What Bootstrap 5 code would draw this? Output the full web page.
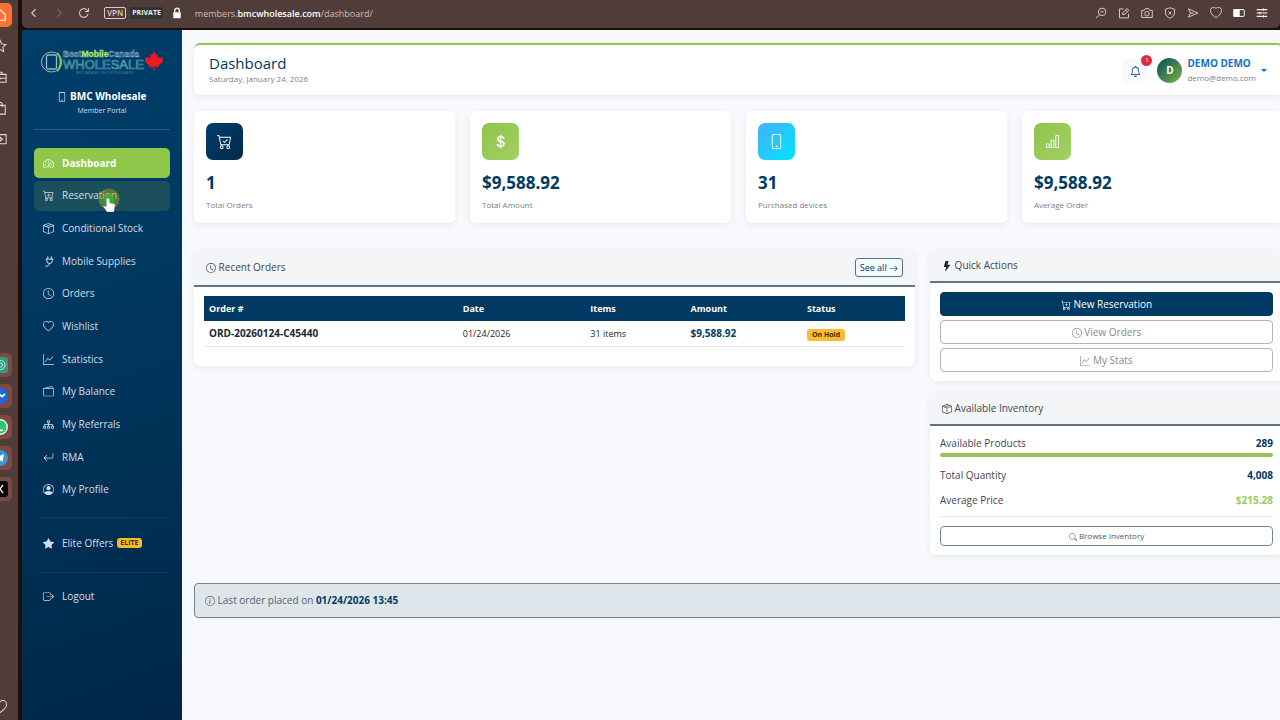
<!DOCTYPE html>
<html lang="en">
<head>
<meta charset="utf-8">
<meta name="viewport" content="width=device-width, initial-scale=1">
<title>Dashboard - BMC Wholesale</title>
<link href="https://cdn.jsdelivr.net/npm/bootstrap@5.3.0/dist/css/bootstrap.min.css" rel="stylesheet">
<style>
:root{--navy:#003a63;--lime:#8fc74a;--ink:#3f464c;--soft:#7b8085}
body{font-family:"Open Sans","Noto Sans",sans-serif;font-size:10px;line-height:15px;color:var(--ink);background:#f8f9fc}
.ico{width:1em;height:1em;fill:currentColor;flex:none;display:inline-block;vertical-align:-2px}
.window{min-height:100vh;background:#1d0d0b}
/* browser frame */
.rail{width:18px;margin-right:4px;background:#503c38;padding:3px 6px 1px 0;color:#e3d9d6;flex:none}
.rail-group{display:flex;flex-direction:column;gap:7px}
.tile{width:24px;height:24px;border-radius:5px;display:flex;align-items:center;justify-content:center;align-self:flex-end;flex:none;font-size:14px;border:0;padding:0;background:none;color:inherit}
.tile-home{background:#ff7033;color:#fff}
.tile-app{background:#7c4a43;font-size:16px}
.toolbar{height:28px;margin-bottom:2px;background:#503c38;color:#d9cecb;padding:0 12px 2px 6px;border-radius:0 0 5px 5px}
.toolbar button{border:0;background:none;color:inherit;padding:0;display:flex;font-size:12px}
.nav-tools{gap:13px;margin-right:14px}
.tools{gap:11px}
.tag-vpn{border:1px solid #d9cecb!important;border-radius:2px;font-size:8px!important;font-weight:600;line-height:10px;padding:0 2px!important}
.tag-private{background:#2c3537;border-radius:2px;font-size:7px;font-weight:700;line-height:12px;padding:0 2px;color:#eee}
.address{font-size:9px;color:#cdbfbc;margin-left:12px}
.address b{color:#fff;font-weight:600}
/* sidebar */
.side{width:160px;flex:none;padding:19px 12px;background:linear-gradient(160deg,#003f6b 0%,#00355c 50%,#002746 100%);color:#d3dfe8}
.side hr{margin:0;border-color:#fff;opacity:.16}
.side hr.faint{opacity:.06;margin-left:6px}
.brand-logo{width:122px;height:28px;display:block;margin:0 auto}
.brand-name{font-weight:700;color:#fff;margin-top:12px}
.brand-sub{font-size:7px;line-height:13px;margin-bottom:12px}
.menu{min-height:357px;margin:18px 0 12px}
.side-link{display:flex;align-items:center;height:30px;padding:0 9px;border-radius:5px;color:#d3dfe8;text-decoration:none;position:relative}
.side-link .ico{font-size:11px;margin-right:8px}
.side-link.active{background:var(--lime);color:#fff;font-weight:700}
.side-link.hovered{background:#1b4f5c}
.elite{background:#f5b92e;color:#3c3210;font-size:7px;line-height:10px;font-weight:700;border-radius:3px;padding:0 3px;margin-left:4px}
.pointer{position:absolute;left:64px;top:5px;width:22px;height:28px}
/* content */
.content{overflow:hidden;background:#f8f9fc;padding:13px 0 20px 12px;min-width:0}
.canvas{margin-right:-3px}
.panel{background:#fff;border-radius:6px;box-shadow:0 2px 6px rgba(30,40,70,.07)}
.top-card{border-top:2px solid var(--lime);padding:9px 19px 9px 15px;margin-bottom:16px}
.top-card h1{font-size:15px;line-height:18px;color:var(--navy);font-weight:500;margin:0}
.date-line{font-size:8px;line-height:14px;color:var(--soft)}
.bell{width:25px;height:25px;border:0;border-radius:5px;background:#f8f9fc;color:var(--navy);position:relative;font-size:11px;padding:0;margin-right:9px}
.count{position:absolute;right:-4px;top:-3px;width:11px;height:11px;border-radius:50%;background:#d5303f;color:#fff;font-size:6px;line-height:11px}
.user{border:0;background:none;padding:0;gap:5px;color:#1470c8}
.avatar{width:25px;height:25px;border-radius:50%;background:linear-gradient(135deg,#084a5c,#79b545);color:#fff;font-weight:700;line-height:25px}
.user-name{font-weight:700;line-height:15px}
.user-mail{font-size:8px;line-height:14px;color:var(--soft)}
.caret{border:3px solid transparent;border-top-color:#1470c8;border-bottom:0;margin-right:-3px}
.grid15{--bs-gutter-x:15px}
.stat{padding:12px 12px 11px;margin-bottom:26px}
.stat-icon{width:37px;height:37px;border-radius:7px;color:#fff;font-size:15px;margin-bottom:12px}
.bg-navy{background:linear-gradient(135deg,#003e6a,#002a4b)}
.bg-lime{background:linear-gradient(135deg,#8fc54a,#a2d063)}
.bg-sky{background:linear-gradient(135deg,#43b0fc,#00e5fb)}
.stat-value{font-size:17px;line-height:22px;font-weight:700;color:var(--navy)}
.stat-label{font-size:8px;line-height:13px;color:var(--soft);margin:4px 0 1px}
.panel-head{background:#f3f5f6;border-bottom:2px solid #5e7581;padding:9px 12px 8px;border-radius:6px 6px 0 0;line-height:15px}
.panel-body{padding:9px 10px}
.quick{margin-bottom:11px}
.btn-line{font-size:9px;line-height:13px;padding:2px 4px;border-radius:3px;border:1px solid #537388;color:var(--navy);text-decoration:none;background:#f4f9fa}
.orders{font-size:9px;margin:0 0 10px;table-layout:fixed}
.orders th,.orders td{padding:5px;line-height:15px;border-bottom:0}
.orders thead th{background:var(--navy);color:#fff}
.orders tbody tr{border-bottom:1px solid #e4e8ea}
.orders tbody th{color:#22272b}
.orders tbody th,.orders .sum{font-size:10px}
.navy{color:var(--navy)!important}
.hold{background:#fdbb34;color:#3b2c06;border-radius:3px;font-size:7px;line-height:12px;font-weight:700;padding:0 5px;display:inline-block}
.act{font-size:10px;line-height:14px;padding:4px;border-radius:4px;border:1px solid #b2b5b8;color:#85898d;background:#fff}
.act-main{background:var(--navy);border-color:var(--navy);color:#fff}
.act-sm{font-size:8px;line-height:12px;padding:3px;border-color:#6e8896;color:#44606f}
.stock{padding-top:10px}
.stock-row{margin-bottom:10px}
.stock hr{margin:8px 0 9px;opacity:.12}
.meter{height:4px;border-radius:2px;background:#e9ecef;margin:2px 0 11px}
.meter .progress-bar{background:#95c356}
.price{color:#9cc95f}
.note{background:#dfe6eb;border:1px solid #6d8798;border-radius:4px;padding:9px 10px;margin-top:28px;color:#56626b}
</style>
</head>
<body>
<svg class="d-none" viewBox="0 0 16 16">
<symbol id="phone" viewBox="0 0 16 16"><path d="M11 1a1 1 0 0 1 1 1v12a1 1 0 0 1-1 1H5a1 1 0 0 1-1-1V2a1 1 0 0 1 1-1zM5 0a2 2 0 0 0-2 2v12a2 2 0 0 0 2 2h6a2 2 0 0 0 2-2V2a2 2 0 0 0-2-2z"/><path d="M8 14a1 1 0 1 0 0-2 1 1 0 0 0 0 2"/></symbol>
<symbol id="speed" viewBox="0 0 16 16"><path d="M8 4a.5.5 0 0 1 .5.5V6a.5.5 0 0 1-1 0V4.500A.5.5 0 0 1 8 4M3.732 5.732a.5.5 0 0 1 .707 0l.915.914a.5.5 0 1 1-.708.708l-.914-.915a.5.5 0 0 1 0-.707M2 10a.5.5 0 0 1 .5-.5h1.586a.5.5 0 0 1 0 1H2.500A.5.5 0 0 1 2 10m9.500 0a.5.5 0 0 1 .5-.5h1.500a.5.5 0 0 1 0 1H12a.5.5 0 0 1-.5-.5m.754-4.246a.39.39 0 0 0-.527-.02L7.547 9.310a.91.91 0 1 0 1.302 1.258l3.434-4.297a.39.39 0 0 0-.029-.518z"/><path fill-rule="evenodd" d="M0 10a8 8 0 1 1 15.547 2.661c-.442 1.253-1.845 1.602-2.932 1.250C11.309 13.488 9.475 13 8 13c-1.474 0-3.310.488-4.615.911-1.087.352-2.490.003-2.932-1.250A8 8 0 0 1 0 10m8-7a7 7 0 0 0-6.603 9.329c.203.575.923.876 1.680.630C4.397 12.533 6.358 12 8 12s3.604.532 4.923.960c.757.245 1.477-.056 1.680-.631A7 7 0 0 0 8 3"/></symbol>
<symbol id="cart" viewBox="0 0 16 16"><path d="M0 1.500A.5.5 0 0 1 .5 1H2a.5.5 0 0 1 .485.379L2.890 3H14.500a.5.5 0 0 1 .491.592l-1.500 8A.5.5 0 0 1 13 12H4a.5.5 0 0 1-.491-.408L2.010 3.607 1.610 2H.5a.5.5 0 0 1-.5-.5M3.102 4l1.313 7h8.170l1.313-7zM5 12a2 2 0 1 0 0 4 2 2 0 0 0 0-4m7 0a2 2 0 1 0 0 4 2 2 0 0 0 0-4m-7 1a1 1 0 1 1 0 2 1 1 0 0 1 0-2m7 0a1 1 0 1 1 0 2 1 1 0 0 1 0-2"/></symbol>
<symbol id="cart-plus" viewBox="0 0 16 16"><use href="#cart"/><path d="M9 5.500a.5.5 0 0 0-1 0V7H6.500a.5.5 0 0 0 0 1H8v1.500a.5.5 0 0 0 1 0V8h1.500a.5.5 0 0 0 0-1H9z"/></symbol>
<symbol id="cart-check" viewBox="0 0 16 16"><use href="#cart"/><path d="M11.354 6.354a.5.5 0 0 0-.708-.708L8 8.293 6.854 7.146a.5.5 0 1 0-.708.708l1.500 1.500a.5.5 0 0 0 .708 0z"/></symbol>
<symbol id="box" viewBox="0 0 16 16"><path d="M8.186 1.113a.5.5 0 0 0-.372 0L1.846 3.500l2.404.961L10.404 2zm3.564 1.426L5.596 5 8 5.961 14.154 3.500zm3.250 1.700-6.500 2.600v7.922l6.500-2.600V4.240zM7.500 14.762V6.838L1 4.239v7.923zM7.443.184a1.500 1.500 0 0 1 1.114 0l7.129 2.852A.5.5 0 0 1 16 3.500v8.662a1 1 0 0 1-.629.928l-7.185 2.874a.5.5 0 0 1-.372 0L.63 13.090a1 1 0 0 1-.63-.928V3.500a.5.5 0 0 1 .314-.464z"/></symbol>
<symbol id="plug" viewBox="0 0 16 16"><g fill="none" stroke="currentColor" stroke-width="1.400" stroke-linecap="round"><path d="M7 1v3M12 1v3M4.500 4.500h10M5.500 4.500V7a4 4 0 0 0 8 0V4.500M9.500 11c0 3.500-3 4-5.500 4"/></g></symbol>
<symbol id="clock" viewBox="0 0 16 16"><path d="M8 3.500a.5.5 0 0 0-1 0V9a.5.5 0 0 0 .252.434l3.500 2a.5.5 0 0 0 .496-.868L8 8.710z"/><path d="M8 16A8 8 0 1 0 8 0a8 8 0 0 0 0 16m7-8A7 7 0 1 1 1 8a7 7 0 0 1 14 0"/></symbol>
<symbol id="heart" viewBox="0 0 16 16"><path d="m8 2.748-.717-.737C5.600.281 2.514.878 1.400 3.053c-.523 1.023-.641 2.500.314 4.385.920 1.815 2.834 3.989 6.286 6.357 3.452-2.368 5.365-4.542 6.286-6.357.955-1.886.838-3.362.314-4.385C13.486.878 10.400.280 8.717 2.010zM8 15C-7.333 4.868 3.279-3.040 7.824 1.143q.090.083.176.171a3 3 0 0 1 .176-.170C12.720-3.042 23.333 4.867 8 15"/></symbol>
<symbol id="graph" viewBox="0 0 16 16"><path fill-rule="evenodd" d="M0 0h1v15h15v1H0zm14.817 3.113a.5.5 0 0 1 .070.704l-4.500 5.500a.5.5 0 0 1-.740.037L7.060 6.767l-3.656 5.027a.5.5 0 0 1-.808-.588l4-5.500a.5.5 0 0 1 .758-.060l2.609 2.610 4.150-5.073a.5.5 0 0 1 .704-.070"/></symbol>
<symbol id="wallet" viewBox="0 0 16 16"><path d="M12.136.326A1.500 1.500 0 0 1 14 1.780V3h.5A1.500 1.500 0 0 1 16 4.500v9a1.500 1.500 0 0 1-1.500 1.500h-13A1.500 1.500 0 0 1 0 13.500v-9a1.500 1.500 0 0 1 1.432-1.499zM5.562 3H13V1.780a.5.5 0 0 0-.621-.484zM1.500 4a.5.5 0 0 0-.5.5v9a.5.5 0 0 0 .5.5h13a.5.5 0 0 0 .5-.5v-9a.5.5 0 0 0-.5-.5z"/></symbol>
<symbol id="diagram" viewBox="0 0 16 16"><g fill="none" stroke="currentColor" stroke-width="1.200"><path d="M6.500 2.500h3v3h-3zM.8 10.500h3v3h-3zM6.500 10.500h3v3h-3zM12.200 10.500h3v3h-3zM8 5.500v5M2 10.500v-2.500h12v2.500"/></g></symbol>
<symbol id="return" viewBox="0 0 16 16"><path fill-rule="evenodd" d="M14.500 1.500a.5.5 0 0 1 .5.5v4.800a2.500 2.500 0 0 1-2.500 2.500H2.707l3.347 3.346a.5.5 0 0 1-.708.708l-4.200-4.200a.5.5 0 0 1 0-.708l4-4a.5.5 0 1 1 .708.708L2.707 8.300H12.500A1.500 1.500 0 0 0 14 6.800V2a.5.5 0 0 1 .5-.5"/></symbol>
<symbol id="person" viewBox="0 0 16 16"><path d="M11 6a3 3 0 1 1-6 0 3 3 0 0 1 6 0"/><path fill-rule="evenodd" d="M0 8a8 8 0 1 1 16 0A8 8 0 0 1 0 8m8-7a7 7 0 0 0-5.468 11.370C3.242 11.226 4.805 10 8 10s4.757 1.225 5.468 2.370A7 7 0 0 0 8 1"/></symbol>
<symbol id="star-fill" viewBox="0 0 16 16"><path d="M3.612 15.443c-.386.198-.824-.149-.746-.592l.830-4.730L.173 6.765c-.329-.314-.158-.888.283-.950l4.898-.696L7.538.792c.197-.390.730-.390.927 0l2.184 4.327 4.898.696c.441.062.612.636.282.950l-3.522 3.356.830 4.730c.078.443-.360.790-.746.592L8 13.187z"/></symbol>
<symbol id="exit" viewBox="0 0 16 16"><path fill-rule="evenodd" d="M10 12.500a.5.5 0 0 1-.5.5h-8a.5.5 0 0 1-.5-.5v-9a.5.5 0 0 1 .5-.5h8a.5.5 0 0 1 .5.5v2a.5.5 0 0 0 1 0v-2A1.500 1.500 0 0 0 9.500 2h-8A1.500 1.500 0 0 0 0 3.500v9A1.500 1.500 0 0 0 1.500 14h8a1.500 1.500 0 0 0 1.500-1.500v-2a.5.5 0 0 0-1 0z"/><path fill-rule="evenodd" d="M15.854 8.354a.5.5 0 0 0 0-.708l-3-3a.5.5 0 0 0-.708.708L14.293 7.500H5.500a.5.5 0 0 0 0 1h8.793l-2.147 2.146a.5.5 0 0 0 .708.708z"/></symbol>
<symbol id="bell" viewBox="0 0 16 16"><path d="M8 16a2 2 0 0 0 2-2H6a2 2 0 0 0 2 2M8 1.918l-.797.161A4 4 0 0 0 4 6c0 .628-.134 2.197-.459 3.742-.160.767-.376 1.566-.663 2.258h10.244c-.287-.692-.502-1.490-.663-2.258C12.134 8.197 12 6.628 12 6a4 4 0 0 0-3.203-3.920zM14.220 12c.223.447.481.801.780 1H1c.299-.199.557-.553.780-1C2.680 10.200 3 6.880 3 6c0-2.420 1.720-4.440 4.005-4.901a1 1 0 1 1 1.990 0A5 5 0 0 1 13 6c0 .880.320 4.200 1.220 6"/></symbol>
<symbol id="search" viewBox="0 0 16 16"><path d="M11.742 10.344a6.500 6.500 0 1 0-1.397 1.398l3.850 3.850a1 1 0 0 0 1.415-1.414zM12 6.500a5.500 5.500 0 1 1-11 0 5.500 5.500 0 0 1 11 0"/></symbol>
<symbol id="bolt" viewBox="0 0 16 16"><path d="M5.520.359A.5.5 0 0 1 6 0h4a.5.5 0 0 1 .474.658L8.694 6H12.500a.5.5 0 0 1 .395.807l-7 9a.5.5 0 0 1-.873-.454L6.823 9.500H3.500a.5.5 0 0 1-.480-.641z"/></symbol>
<symbol id="info" viewBox="0 0 16 16"><path d="M8 15A7 7 0 1 1 8 1a7 7 0 0 1 0 14m0 1A8 8 0 1 0 8 0a8 8 0 0 0 0 16"/><path d="m8.930 6.588-2.290.287-.082.380.450.083c.294.070.352.176.288.469l-.738 3.468c-.194.897.105 1.319.808 1.319.545 0 1.178-.252 1.465-.598l.088-.416c-.200.176-.492.246-.686.246-.275 0-.375-.193-.304-.533zM9 4.500a1 1 0 1 1-2 0 1 1 0 0 1 2 0"/></symbol>
<symbol id="arrow" viewBox="0 0 16 16"><path fill-rule="evenodd" d="M1 8a.5.5 0 0 1 .5-.5h11.793l-3.147-3.146a.5.5 0 0 1 .708-.708l4 4a.5.5 0 0 1 0 .708l-4 4a.5.5 0 0 1-.708-.708L13.293 8.500H1.500A.5.5 0 0 1 1 8"/></symbol>
<symbol id="bars" viewBox="0 0 16 16"><path d="M4 11H2v3h2zm5-4H7v7h2zm5-5v12h-2V2zm-2-1a1 1 0 0 0-1 1v12a1 1 0 0 0 1 1h2a1 1 0 0 0 1-1V2a1 1 0 0 0-1-1zM6 7a1 1 0 0 1 1-1h2a1 1 0 0 1 1 1v7a1 1 0 0 1-1 1H7a1 1 0 0 1-1-1zm-5 4a1 1 0 0 1 1-1h2a1 1 0 0 1 1 1v3a1 1 0 0 1-1 1H2a1 1 0 0 1-1-1z"/></symbol>
<symbol id="dollar" viewBox="0 0 16 16"><path stroke="currentColor" stroke-width=".4" d="M4 10.781c.148 1.667 1.513 2.850 3.591 3.003V15h1.043v-1.216c2.270-.179 3.678-1.438 3.678-3.300 0-1.590-.947-2.510-2.956-3.028l-.722-.187V3.467c1.122.110 1.879.714 2.070 1.616h1.470c-.166-1.600-1.540-2.748-3.540-2.875V1H7.591v1.233c-1.939.230-3.270 1.472-3.270 3.156 0 1.454.966 2.483 2.661 2.917l.610.162v4.031c-1.149-.170-1.940-.800-2.131-1.718zm3.391-3.836c-1.043-.263-1.600-.825-1.600-1.616 0-.944.704-1.641 1.800-1.828v3.495l-.200-.050zm1.591 1.872c1.287.323 1.852.859 1.852 1.769 0 1.097-.826 1.828-2.200 1.939V8.730z"/></symbol>
<symbol id="back" viewBox="0 0 16 16"><path d="M10 3 5 8l5 5" fill="none" stroke="currentColor" stroke-width="1.500"/></symbol>
<symbol id="fwd" viewBox="0 0 16 16"><path d="m6 3 5 5-5 5" fill="none" stroke="currentColor" stroke-width="1.300"/></symbol>
<symbol id="reload" viewBox="0 0 16 16"><path d="M13.500 9A5.800 5.800 0 1 1 12 4l1.500 1.500M14 1.500v4.500H9.500" fill="none" stroke="currentColor" stroke-width="1.400"/></symbol>
<symbol id="lock" viewBox="0 0 16 16"><path d="M3 7h10v8H3z" fill="#fff"/><path d="M5 7V4.500a3 3 0 0 1 6 0V7" fill="none" stroke="#fff" stroke-width="1.800"/></symbol>
<symbol id="zoomout" viewBox="0 0 16 16"><path d="M14.500 6.500a5 5 0 1 1-10 0 5 5 0 0 1 10 0M6 10.500 1 15M7.500 6.500h4" fill="none" stroke="currentColor" stroke-width="1.300"/></symbol>
<symbol id="edit" viewBox="0 0 16 16"><path d="M7 2.500H2v12h12V9M6 10l1-3 5-5 2.500 2.500-5 5zM10 4l2.500 2.500" fill="none" stroke="currentColor" stroke-width="1.300"/></symbol>
<symbol id="camera" viewBox="0 0 16 16"><path d="M1 4.500h3.500L6 2h4l1.500 2.500H15V14H1zM11 9a3 3 0 1 1-6 0 3 3 0 0 1 6 0" fill="none" stroke="currentColor" stroke-width="1.300"/></symbol>
<symbol id="shield" viewBox="0 0 16 16"><path d="m8 1 6 2v5c0 3.500-2.500 5.500-6 7-3.500-1.500-6-3.500-6-7V3zM6 6l4 4M10 6l-4 4" fill="none" stroke="currentColor" stroke-width="1.300"/></symbol>
<symbol id="send" viewBox="0 0 16 16"><path d="M2 2.500 14.500 8 2 13.500 4.500 8zM4.500 8H9" fill="none" stroke="currentColor" stroke-width="1.300"/></symbol>
<symbol id="battery" viewBox="0 0 16 16"><path d="M1 3.500h13a1 1 0 0 1 1 1v7a1 1 0 0 1-1 1H1z" fill="none" stroke="#fff" stroke-width="1.300"/><path d="M1 3h8v10H1z" fill="#fff"/></symbol>
<symbol id="sliders" viewBox="0 0 16 16"><path d="M1 3.500h14M1 8h14M1 12.500h14M10 2v3M5 6.500v3M10 11v3" fill="none" stroke="#fff" stroke-width="1.400"/></symbol>
<symbol id="home" viewBox="0 0 16 16"><path d="M2 7.500 8 2l6 5.500V14H2z" fill="none" stroke="currentColor" stroke-width="1.300"/></symbol>
<symbol id="star" viewBox="0 0 16 16"><path d="m8 1.500 2 4.300 4.700.600-3.500 3.200.900 4.700L8 12l-4.100 2.300.900-4.700L1.300 6.400 6 5.800z" fill="none" stroke="currentColor" stroke-width="1.200"/></symbol>
<symbol id="case" viewBox="0 0 16 16"><path d="M1 5h14v9H1zM5.500 5V2.500h5V5M1 9.500h14M8 8.500v2.500" fill="none" stroke="currentColor" stroke-width="1.200"/></symbol>
<symbol id="bag" viewBox="0 0 16 16"><path d="M2 5h12v10H2zM5.500 7V4a2.500 2.500 0 0 1 5 0v3" fill="none" stroke="currentColor" stroke-width="1.200"/></symbol>
<symbol id="play" viewBox="0 0 16 16"><path d="M1 3h14v10.500H1zM8 6l3 2.300L8 10.500z" fill="none" stroke="currentColor" stroke-width="1.200"/></symbol>
</svg>

<div class="window d-flex">
  <aside class="rail d-flex flex-column justify-content-between overflow-hidden" aria-label="Browser sidebar">
    <div class="rail-group">
      <button class="tile tile-home" aria-label="Home"><svg class="ico"><use href="#home"/></svg></button>
      <button class="tile" aria-label="Favourites"><svg class="ico"><use href="#star"/></svg></button>
      <button class="tile" aria-label="Workspace"><svg class="ico"><use href="#case"/></svg></button>
      <button class="tile" aria-label="Shopping"><svg class="ico"><use href="#bag"/></svg></button>
      <button class="tile" aria-label="Player"><svg class="ico"><use href="#play"/></svg></button>
    </div>
    <div class="rail-group pt-2">
      <button class="tile tile-app" aria-label="Assistant"><svg class="ico" viewBox="0 0 16 16"><rect width="16" height="16" rx="3" fill="#369b80"/><g fill="none" stroke="#c9f0e4"><circle cx="8.500" cy="8" r="4.500"/><circle cx="8.500" cy="8" r="2"/></g></svg></button>
      <button class="tile tile-app" aria-label="Messenger"><svg class="ico" viewBox="0 0 16 16"><circle cx="8" cy="8" r="8" fill="#1769dd"/><path d="m4 10 3-4 3 2.500L13 6" fill="none" stroke="#fff" stroke-width="1.800"/></svg></button>
      <button class="tile tile-app" aria-label="WhatsApp"><svg class="ico" viewBox="0 0 16 16"><circle cx="8" cy="8" r="7.300" fill="#2fc764" stroke="#e8f7ec" stroke-width="1.400"/><path d="M5 8c1 3 4 4 6 3" fill="none" stroke="#fff" stroke-width="1.500"/></svg></button>
      <button class="tile tile-app" aria-label="Telegram"><svg class="ico" viewBox="0 0 16 16"><circle cx="8" cy="8" r="8" fill="#3399cc"/><path d="m3 8 9-4-1.500 8L7 9.500z" fill="#fff"/></svg></button>
      <button class="tile tile-app" aria-label="X"><svg class="ico" viewBox="0 0 16 16"><rect width="16" height="16" rx="3" fill="#050505"/><path d="m5 4 6 8M11 4l-6 8" stroke="#fff" stroke-width="1.300"/></svg></button>
    </div>
    <div class="rail-group"><button class="tile" aria-label="Likes"><svg class="ico"><use href="#heart"/></svg></button></div>
  </aside>

  <div class="d-flex flex-column flex-grow-1 overflow-hidden">
    <div class="toolbar d-flex align-items-center justify-content-between">
      <div class="d-flex align-items-center">
        <div class="nav-tools d-flex">
          <button aria-label="Back"><svg class="ico"><use href="#back"/></svg></button>
          <button class="opacity-50" aria-label="Forward"><svg class="ico"><use href="#fwd"/></svg></button>
          <button aria-label="Reload"><svg class="ico"><use href="#reload"/></svg></button>
        </div>
        <button class="tag-vpn me-1">VPN</button>
        <span class="tag-private me-2">PRIVATE</span>
        <button aria-label="Site security"><svg class="ico"><use href="#lock"/></svg></button>
        <span class="address">members.<b>bmcwholesale.com</b>/dashboard/</span>
      </div>
      <div class="tools d-flex align-items-center">
        <button aria-label="Zoom out"><svg class="ico"><use href="#zoomout"/></svg></button>
        <button aria-label="Edit"><svg class="ico"><use href="#edit"/></svg></button>
        <button aria-label="Snapshot"><svg class="ico"><use href="#camera"/></svg></button>
        <button aria-label="Ad blocker"><svg class="ico"><use href="#shield"/></svg></button>
        <button aria-label="Send"><svg class="ico"><use href="#send"/></svg></button>
        <button aria-label="Like"><svg class="ico"><use href="#heart"/></svg></button>
        <button aria-label="Battery saver"><svg class="ico"><use href="#battery"/></svg></button>
        <button aria-label="Easy setup"><svg class="ico"><use href="#sliders"/></svg></button>
      </div>
    </div>

    <div class="d-flex flex-grow-1">
      <nav class="side" aria-label="Member menu">
        <svg class="brand-logo" viewBox="0 0 122 28" role="img" aria-label="Best Mobile Canada Wholesale">
          <g fill="none" stroke="#9ab7c7"><circle cx="10.500" cy="13" r="10"/><rect x="5.500" y="6" width="10" height="14" rx="1.500" stroke-width="1.300"/></g>
          <path d="M16 4c5 5 5 13 0 18" fill="none" stroke="#8fc74a" stroke-width="2"/>
          <g font-family="Liberation Sans, sans-serif" font-weight="700">
            <text x="22" y="8" font-size="8.500" fill="#16517a" stroke="#a9c3d0" stroke-width=".4">Best<tspan fill="#a6e36b" stroke="#a6e36b">Mobile</tspan>Canada</text>
            <text x="22" y="20" font-size="13" font-weight="400" fill="none" stroke="#5ba3ae" stroke-width=".7">WHOLESALE</text>
            <text x="35" y="25" font-size="3" font-weight="400" fill="#4f8399">BEST MANAGED, BUILT FOR BUSINESS</text>
          </g>
          <path d="m113 2 2 4 2-1-.6 5 2.600-2.500.6 1.500 2.900-.3-1.200 3 1 .8-4.800 4 .5 1.800-4.500-.7.200 4h-1.400l.2-4-4.500.7.5-1.800-4.800-4 1-.8-1.200-3 2.900.3.6-1.500 2.600 2.500-.6-5 2 1z" fill="#f21820"/>
        </svg>
        <div class="brand-name text-center"><svg class="ico"><use href="#phone"/></svg> BMC Wholesale</div>
        <div class="brand-sub text-center">Member Portal</div>
        <hr>
        <ul class="menu list-unstyled d-flex flex-column justify-content-between">
          <li><a class="side-link active" href="#" aria-current="page"><svg class="ico"><use href="#speed"/></svg>Dashboard</a></li>
          <li><a class="side-link hovered" href="#"><svg class="ico"><use href="#cart-plus"/></svg>Reservation
            <svg class="pointer" viewBox="0 0 22 28" aria-hidden="true"><circle cx="11" cy="13" r="10.500" fill="#9aa51e" opacity=".5"/><circle cx="11" cy="14" r="5" fill="#19c819" opacity=".85"/><path d="M10 12c1.200 0 1.800.7 1.800 1.800v3l4 .8c1 .2 1.400.8 1.300 1.800L16 26h-7l-4-5.500c.7-1.200 2-.8 3.200.5v-7.200c0-1.100.6-1.800 1.800-1.800z" fill="#fff" stroke="#444" stroke-width=".4"/></svg></a></li>
          <li><a class="side-link" href="#"><svg class="ico"><use href="#box"/></svg>Conditional Stock</a></li>
          <li><a class="side-link" href="#"><svg class="ico"><use href="#plug"/></svg>Mobile Supplies</a></li>
          <li><a class="side-link" href="#"><svg class="ico"><use href="#clock"/></svg>Orders</a></li>
          <li><a class="side-link" href="#"><svg class="ico"><use href="#heart"/></svg>Wishlist</a></li>
          <li><a class="side-link" href="#"><svg class="ico"><use href="#graph"/></svg>Statistics</a></li>
          <li><a class="side-link" href="#"><svg class="ico"><use href="#wallet"/></svg>My Balance</a></li>
          <li><a class="side-link" href="#"><svg class="ico"><use href="#diagram"/></svg>My Referrals</a></li>
          <li><a class="side-link" href="#"><svg class="ico"><use href="#return"/></svg>RMA</a></li>
          <li><a class="side-link" href="#"><svg class="ico"><use href="#person"/></svg>My Profile</a></li>
        </ul>
        <hr class="faint">
        <a class="side-link my-2 pt-1" href="#"><svg class="ico"><use href="#star-fill"/></svg>Elite Offers<span class="elite">ELITE</span></a>
        <hr class="faint mt-3">
        <a class="side-link mt-2" href="#"><svg class="ico"><use href="#exit"/></svg>Logout</a>
      </nav>

      <main class="content flex-grow-1">
        <div class="canvas">
          <header class="panel top-card d-flex justify-content-between align-items-center">
            <div>
              <h1>Dashboard</h1>
              <div class="date-line">Saturday, January 24, 2026</div>
            </div>
            <div class="d-flex align-items-center">
              <button class="bell" aria-label="Notifications"><svg class="ico"><use href="#bell"/></svg><span class="count">1</span></button>
              <button class="user d-flex align-items-center text-start">
                <span class="avatar text-center">D</span>
                <span><span class="user-name d-block">DEMO DEMO</span><span class="user-mail d-block">demo@demo.com</span></span>
                <span class="caret"></span>
              </button>
            </div>
          </header>

          <div class="row grid15">
            <div class="col-3"><div class="panel stat">
              <div class="stat-icon bg-navy d-flex align-items-center justify-content-center"><svg class="ico"><use href="#cart-check"/></svg></div>
              <div class="stat-value">1</div><div class="stat-label">Total Orders</div></div></div>
            <div class="col-3"><div class="panel stat">
              <div class="stat-icon bg-lime d-flex align-items-center justify-content-center"><svg class="ico"><use href="#dollar"/></svg></div>
              <div class="stat-value">$9,588.92</div><div class="stat-label">Total Amount</div></div></div>
            <div class="col-3"><div class="panel stat">
              <div class="stat-icon bg-sky d-flex align-items-center justify-content-center"><svg class="ico"><use href="#phone"/></svg></div>
              <div class="stat-value">31</div><div class="stat-label">Purchased devices</div></div></div>
            <div class="col-3"><div class="panel stat">
              <div class="stat-icon bg-lime d-flex align-items-center justify-content-center"><svg class="ico"><use href="#bars"/></svg></div>
              <div class="stat-value">$9,588.92</div><div class="stat-label">Average Order</div></div></div>
          </div>

          <div class="row grid15">
            <div class="col-8">
              <section class="panel">
                <div class="panel-head d-flex justify-content-between align-items-center">
                  <span><svg class="ico"><use href="#clock"/></svg> Recent Orders</span>
                  <a class="btn-line" href="#">See all <svg class="ico"><use href="#arrow"/></svg></a>
                </div>
                <div class="panel-body">
                  <table class="table orders">
                    <colgroup><col style="width:36.2%"><col style="width:18.2%"><col style="width:14.3%"><col style="width:16.6%"><col style="width:14.7%"></colgroup>
                    <thead><tr><th scope="col">Order #</th><th scope="col">Date</th><th scope="col">Items</th><th scope="col">Amount</th><th scope="col">Status</th></tr></thead>
                    <tbody><tr><th scope="row">ORD-20260124-C45440</th><td>01/24/2026</td><td>31 items</td><td class="sum fw-bold navy">$9,588.92</td><td><span class="hold">On Hold</span></td></tr></tbody>
                  </table>
                </div>
              </section>
            </div>
            <div class="col-4">
              <section class="panel quick">
                <div class="panel-head"><svg class="ico text-dark"><use href="#bolt"/></svg> Quick Actions</div>
                <div class="panel-body d-grid gap-1">
                  <button class="act act-main"><svg class="ico"><use href="#cart-plus"/></svg> New Reservation</button>
                  <button class="act"><svg class="ico"><use href="#clock"/></svg> View Orders</button>
                  <button class="act"><svg class="ico"><use href="#graph"/></svg> My Stats</button>
                </div>
              </section>
              <section class="panel">
                <div class="panel-head"><svg class="ico"><use href="#box"/></svg> Available Inventory</div>
                <div class="panel-body stock">
                  <div class="d-flex justify-content-between"><span>Available Products</span><b class="navy">289</b></div>
                  <div class="progress meter" role="progressbar" aria-label="Available products" aria-valuenow="100" aria-valuemin="0" aria-valuemax="100"><div class="progress-bar" style="width:100%"></div></div>
                  <div class="stock-row d-flex justify-content-between"><span>Total Quantity</span><b class="navy">4,008</b></div>
                  <div class="d-flex justify-content-between"><span>Average Price</span><b class="price">$215.28</b></div>
                  <hr>
                  <button class="act act-sm w-100"><svg class="ico"><use href="#search"/></svg> Browse Inventory</button>
                </div>
              </section>
            </div>
          </div>

          <div class="note"><svg class="ico"><use href="#info"/></svg> Last order placed on <b class="navy">01/24/2026 13:45</b></div>
        </div>
      </main>
    </div>
  </div>
</div>
<script src="https://cdn.jsdelivr.net/npm/bootstrap@5.3.0/dist/js/bootstrap.bundle.min.js"></script>
</body>
</html>
